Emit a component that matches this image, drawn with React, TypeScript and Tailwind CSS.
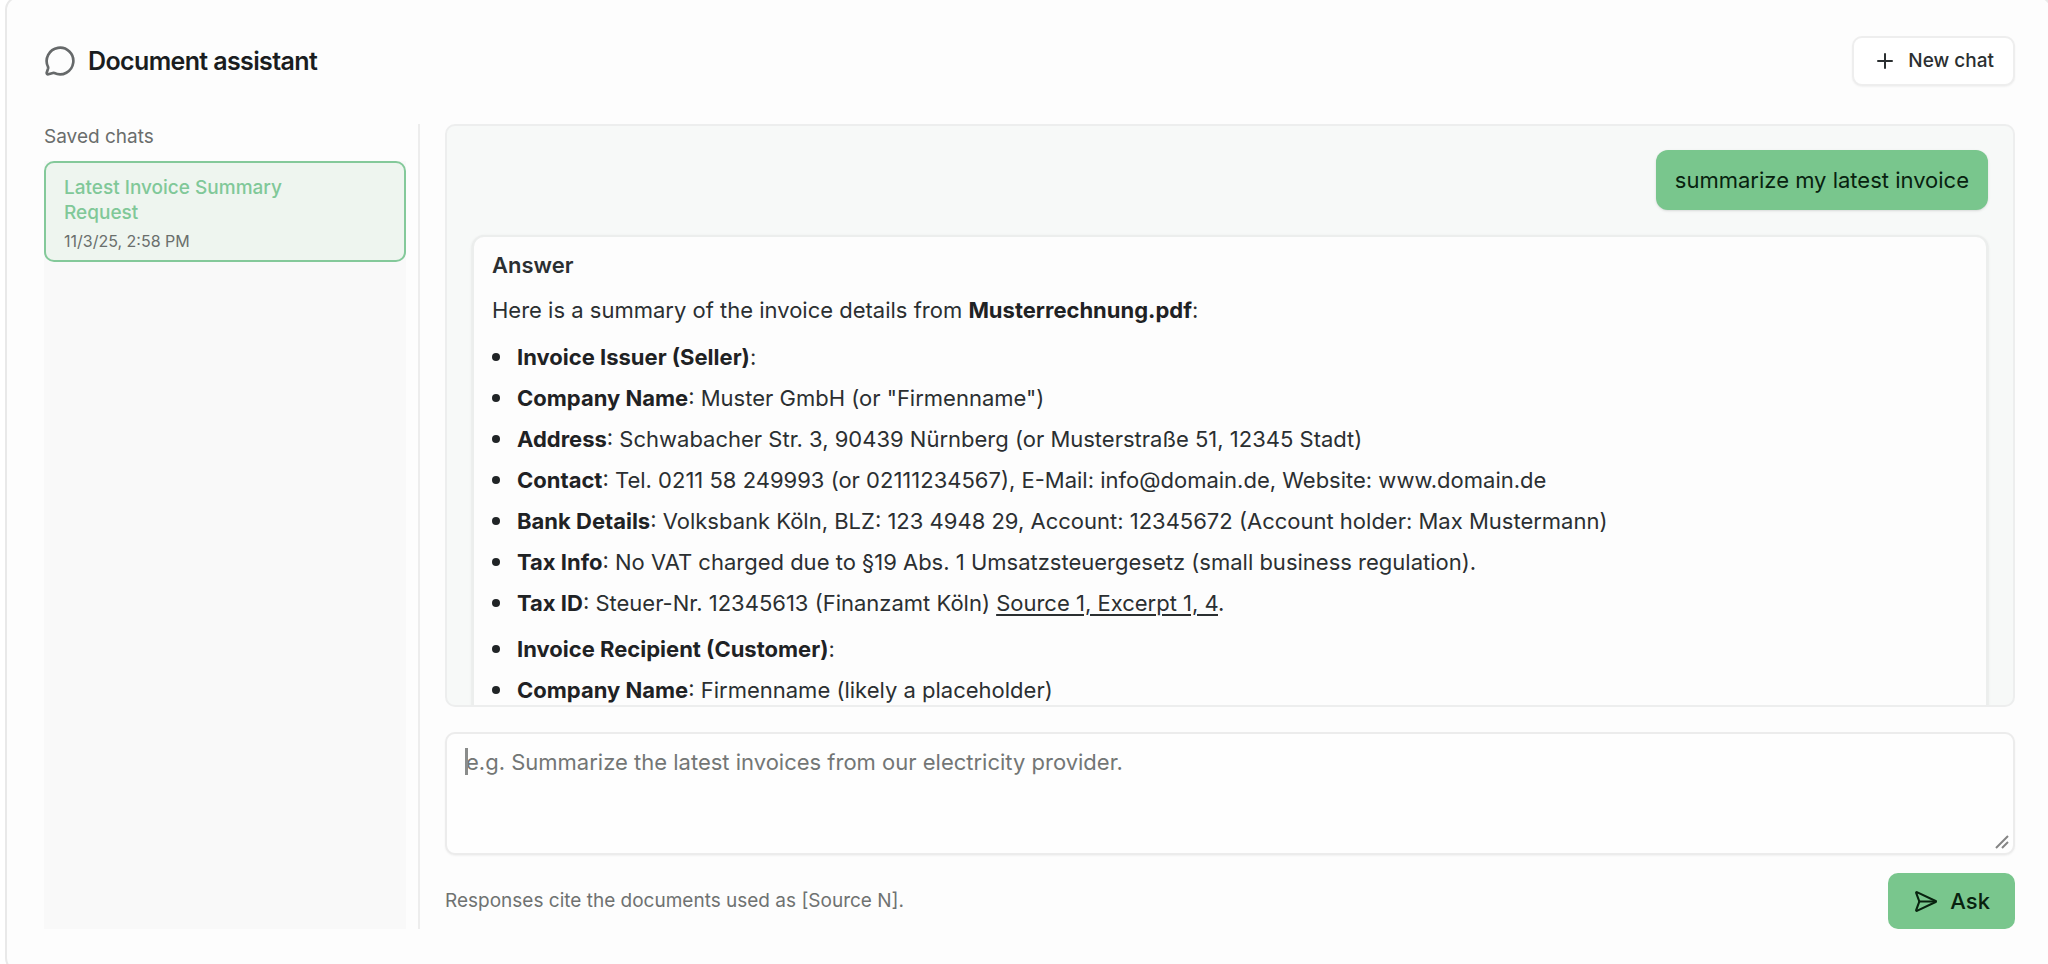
import { useState } from "react";
import { MessageCircle, Plus, SendHorizontal } from "lucide-react";

const sellerDetails = [
  { label: "Invoice Issuer (Seller)", text: "" },
  { label: "Company Name", text: ' Muster GmbH (or "Firmenname")' },
  { label: "Address", text: " Schwabacher Str. 3, 90439 Nürnberg (or Musterstraße 51, 12345 Stadt)" },
  { label: "Contact", text: " Tel. 0211 58 249993 (or 02111234567), E-Mail: info@domain.de, Website: www.domain.de" },
  { label: "Bank Details", text: " Volksbank Köln, BLZ: 123 4948 29, Account: 12345672 (Account holder: Max Mustermann)" },
  { label: "Tax Info", text: " No VAT charged due to §19 Abs. 1 Umsatzsteuergesetz (small business regulation)." },
  { label: "Tax ID", text: " Steuer-Nr. 12345613 (Finanzamt Köln) ", source: "Source 1, Excerpt 1, 4" },
];

const customerDetails = [
  { label: "Invoice Recipient (Customer)", text: "" },
  { label: "Company Name", text: " Firmenname (likely a placeholder)" },
];

type Detail = { label: string; text: string; source?: string };

function DetailList({ items }: { items: Detail[] }) {
  return (
    <ul className="flex flex-col gap-[9px]">
      {items.map((item) => (
        <li key={item.label} className="flex items-start">
          <span className="mt-3 mr-[17px] size-2 shrink-0 rounded-full bg-[#202426]" />
          <p>
            <strong className="font-bold text-[#1f2224]">{item.label}</strong>:{item.text}
            {item.source && (
              <>
                <a href="#source-1" className="underline underline-offset-3">{item.source}</a>.
              </>
            )}
          </p>
        </li>
      ))}
    </ul>
  );
}

function Sidebar() {
  return (
    <aside className="flex w-[376px] shrink-0 flex-col border-r-2 border-[#ededed] pr-3">
      <h2 className="mb-3 text-[19px] leading-[25px] text-[#6a6d6c]">Saved chats</h2>
      <div className="flex-1 bg-[#f9f9f9]">
        <button className="block w-full rounded-[10px] border-2 border-[#84c99a] bg-[#eef5ef] pt-3 pr-20 pb-[6px] pl-[18px] text-left">
          <span className="block text-[19px] leading-[25px] font-medium text-[#80c898]">
            Latest Invoice Summary Request
          </span>
          <span className="mt-1 block text-[16px] leading-[25px] text-[#6a6f6c]">11/3/25, 2:58 PM</span>
        </button>
      </div>
    </aside>
  );
}

export default function App() {
  const [question, setQuestion] = useState("");

  return (
    <main className="flex h-screen overflow-hidden bg-white pl-[5px] font-[Inter,sans-serif] text-[#2b2f31]">
      <div className="-mt-1 -mr-1 -mb-2 flex flex-1 flex-col rounded-[14px] border-2 border-[#e9e9e9] bg-[#fdfdfd] pt-[38px] pr-[35px] pb-[41px] pl-[37px]">
        <header className="flex items-center justify-between">
          <div className="flex items-center gap-3">
            <MessageCircle className="size-8 text-[#66696a]" strokeWidth={2} />
            <h1 className="text-[25px] leading-8 font-semibold tracking-tight text-[#1a1d1f]">Document assistant</h1>
          </div>
          <button className="flex h-[50px] items-center gap-[11px] rounded-[10px] border-2 border-[#eeeeee] bg-white px-[19px] text-[19px] font-medium shadow-xs">
            <Plus className="size-6" strokeWidth={2} />
            New chat
          </button>
        </header>

        <div className="mt-[38px] flex min-h-0 flex-1">
          <Sidebar />

          <section className="ml-[25px] flex min-w-0 flex-1 flex-col">
            <div className="min-h-0 flex-1 overflow-hidden rounded-[10px] border-2 border-[#edeeee] bg-[#f7f9f8] px-[25px] py-6 text-[22px] leading-8">
              <div className="flex justify-end">
                <p className="rounded-xl bg-[#79c68d] px-[19px] py-[14px] text-[#08220f] shadow-sm">
                  summarize my latest invoice
                </p>
              </div>

              <article className="mt-[25px] rounded-xl border-2 border-[#eceeed] bg-[#fdfdfd] px-[18px] py-3 shadow-sm">
                <h3 className="font-semibold">Answer</h3>
                <p className="mt-[13px] mb-[15px]">
                  Here is a summary of the invoice details from{" "}
                  <strong className="font-bold text-[#1f2224]">Musterrechnung.pdf</strong>:
                </p>
                <DetailList items={sellerDetails} />
                <div className="mt-[14px]">
                  <DetailList items={customerDetails} />
                </div>
              </article>
            </div>

            <div className="relative mt-[25px] flex">
              <textarea
                aria-label="Question"
                className="h-[123px] w-full resize-none rounded-[10px] border-2 border-[#ececec] bg-[#fefefe] px-[19px] py-3 text-[22px] leading-8 shadow-xs outline-none placeholder:text-[#737675]"
                placeholder="e.g. Summarize the latest invoices from our electricity provider."
                value={question}
                onChange={(e) => setQuestion(e.target.value)}
              />
              {/* caret and resize grip */}
              <span className="absolute top-4 left-5 h-[27px] w-[3px] bg-[#8a8c8b]" />
              <svg className="absolute right-[6px] bottom-[6px] size-[14px]" viewBox="0 0 14 14" fill="none" stroke="#858585" strokeWidth="2">
                <path d="M1 13 13 1M7 13l6-6" />
              </svg>
            </div>

            <div className="mt-[18px] flex items-center justify-between">
              <p className="text-[19px] leading-6 text-[#6f7271]">Responses cite the documents used as [Source N].</p>
              <button className="flex h-14 items-center gap-3 rounded-[10px] bg-[#79c68d] px-[25px] text-[22px] font-medium text-[#08220f]">
                <SendHorizontal className="size-[25px]" strokeWidth={2} />
                Ask
              </button>
            </div>
          </section>
        </div>
      </div>
    </main>
  );
}
